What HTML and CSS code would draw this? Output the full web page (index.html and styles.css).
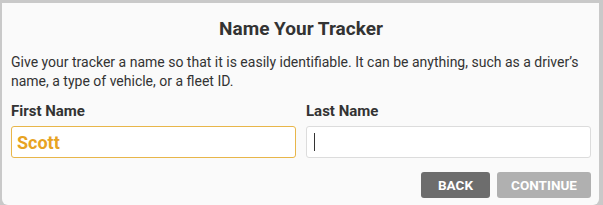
FILE: index.html
```html
<!DOCTYPE html>
<html lang="en">
<head>
  <meta charset="UTF-8" />
  <title>Name Your Tracker</title>
  <link rel="stylesheet" href="styles.css">
</head>
<body>
  <div class="dialog">
    <h2>Name Your Tracker</h2>
    <p class="intro">Give your tracker a name so that it is easily identifiable. It can be anything, such as a driver’s name, a type of vehicle, or a fleet ID.</p>
    <div class="fields">
      <div class="field">
        <label for="first">First Name</label>
        <div class="input filled" id="first">Scott</div>
      </div>
      <div class="field">
        <label for="last">Last Name</label>
        <div class="input" id="last"><span class="caret"></span></div>
      </div>
    </div>
    <div class="actions">
      <button class="btn back">BACK</button>
      <button class="btn continue">CONTINUE</button>
    </div>
  </div>
</body>
</html>
```

FILE: styles.css
```css
body {
  margin: 0;
  background-color: #c9c9c9;
  font-family: Roboto, "Liberation Sans", Arial, sans-serif;
  color: #333;
  height: 205px;
  overflow: hidden;
}

.dialog {
  margin: 3px 0 0 2px;
  width: 597px;
  height: 202px;
  box-sizing: border-box;
  background-color: #fafafa;
  border-radius: 0 0 6px 6px;
  padding: 13px 8px 0 9px;
}

.dialog h2 {
  margin: 0;
  text-align: center;
  font-size: 19px;
  font-weight: 700;
  line-height: 26px;
}

.intro {
  margin: 11px 0 0 0;
  font-size: 14px;
  line-height: 19px;
}

.fields {
  display: flex;
  gap: 10px;
  margin-top: 11px;
}

.field {
  flex: 1;
}

.field label {
  display: block;
  font-size: 15px;
  font-weight: 700;
  line-height: 18px;
  margin-bottom: 6px;
}

.input {
  height: 32px;
  box-sizing: border-box;
  border: 1px solid #dcdcdc;
  border-radius: 3px;
  background-color: #fff;
  padding: 0 8px;
  display: flex;
  align-items: center;
}

.input.filled {
  border-color: #e8b64a;
  color: #e7a323;
  font-size: 18px;
  font-weight: 700;
  padding-left: 5px;
}

.caret {
  display: block;
  width: 1px;
  height: 18px;
  background-color: #333;
  margin-left: -1px;
}

.actions {
  display: flex;
  justify-content: flex-end;
  gap: 7px;
  margin-top: 14px;
}

.btn {
  border: none;
  border-radius: 3px;
  color: #fff;
  font-family: Roboto, "Liberation Sans", Arial, sans-serif;
  font-size: 13.5px;
  font-weight: 700;
  height: 26px;
  padding: 0;
}

.btn.back {
  background-color: #6d6d6d;
  width: 69px;
}

.btn.continue {
  background-color: #b0b0b0;
  width: 94px;
}
```
